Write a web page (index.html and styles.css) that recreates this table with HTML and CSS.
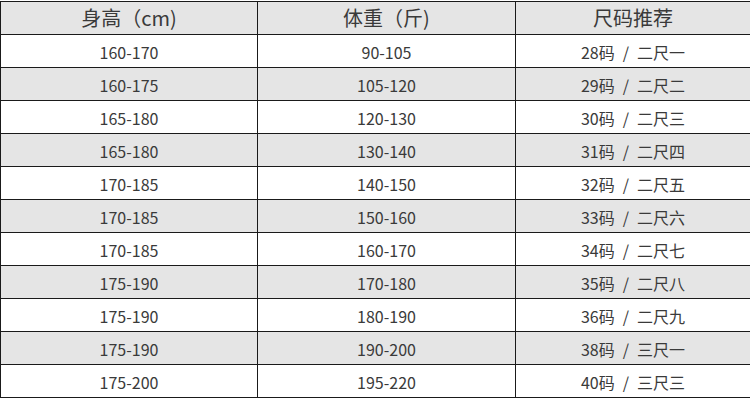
FILE: index.html
```html
<!DOCTYPE html>
<html lang="zh-CN">
<head>
<meta charset="utf-8">
<title>尺码推荐</title>
<link rel="stylesheet" href="styles.css">
</head>
<body>
<table class="size-table">
  <colgroup>
    <col class="c1"><col class="c2"><col class="c3">
  </colgroup>
  <thead>
    <tr><th>身高（cm)</th><th>体重（斤)</th><th>尺码推荐</th></tr>
  </thead>
  <tbody>
    <tr><td>160-170</td><td>90-105</td><td>28码&ensp;/&ensp;二尺一</td></tr>
    <tr><td>160-175</td><td>105-120</td><td>29码&ensp;/&ensp;二尺二</td></tr>
    <tr><td>165-180</td><td>120-130</td><td>30码&ensp;/&ensp;二尺三</td></tr>
    <tr><td>165-180</td><td>130-140</td><td>31码&ensp;/&ensp;二尺四</td></tr>
    <tr><td>170-185</td><td>140-150</td><td>32码&ensp;/&ensp;二尺五</td></tr>
    <tr><td>170-185</td><td>150-160</td><td>33码&ensp;/&ensp;二尺六</td></tr>
    <tr><td>170-185</td><td>160-170</td><td>34码&ensp;/&ensp;二尺七</td></tr>
    <tr><td>175-190</td><td>170-180</td><td>35码&ensp;/&ensp;二尺八</td></tr>
    <tr><td>175-190</td><td>180-190</td><td>36码&ensp;/&ensp;二尺九</td></tr>
    <tr><td>175-190</td><td>190-200</td><td>38码&ensp;/&ensp;三尺一</td></tr>
    <tr><td>175-200</td><td>195-220</td><td>40码&ensp;/&ensp;三尺三</td></tr>
  </tbody>
</table>
</body>
</html>
```
FILE: styles.css
```css
html, body {
  margin: 0;
  padding: 0;
  background: #ffffff;
}
body {
  padding-top: 1px;
  font-family: "Noto Sans CJK SC", "Noto Sans", sans-serif;
  color: #3a3a3a;
}
.size-table {
  width: 750px;
  border-collapse: collapse;
  table-layout: fixed;
}
.c1 { width: 257px; }
.c2 { width: 258px; }
.c3 { width: 235px; }
.size-table th,
.size-table td {
  border: 1px solid #1a1a1a;
  text-align: center;
  vertical-align: middle;
  padding: 0;
  height: 32px;
  line-height: 20px;
}
.size-table th {
  font-size: 20px;
  font-weight: 400;
  background: #e5e5e5;
}
.size-table td {
  font-size: 16px;
  height: 31px;
  padding-top: 1px;
}
.size-table tbody tr:nth-child(even) td {
  background: #e5e5e5;
}
```
